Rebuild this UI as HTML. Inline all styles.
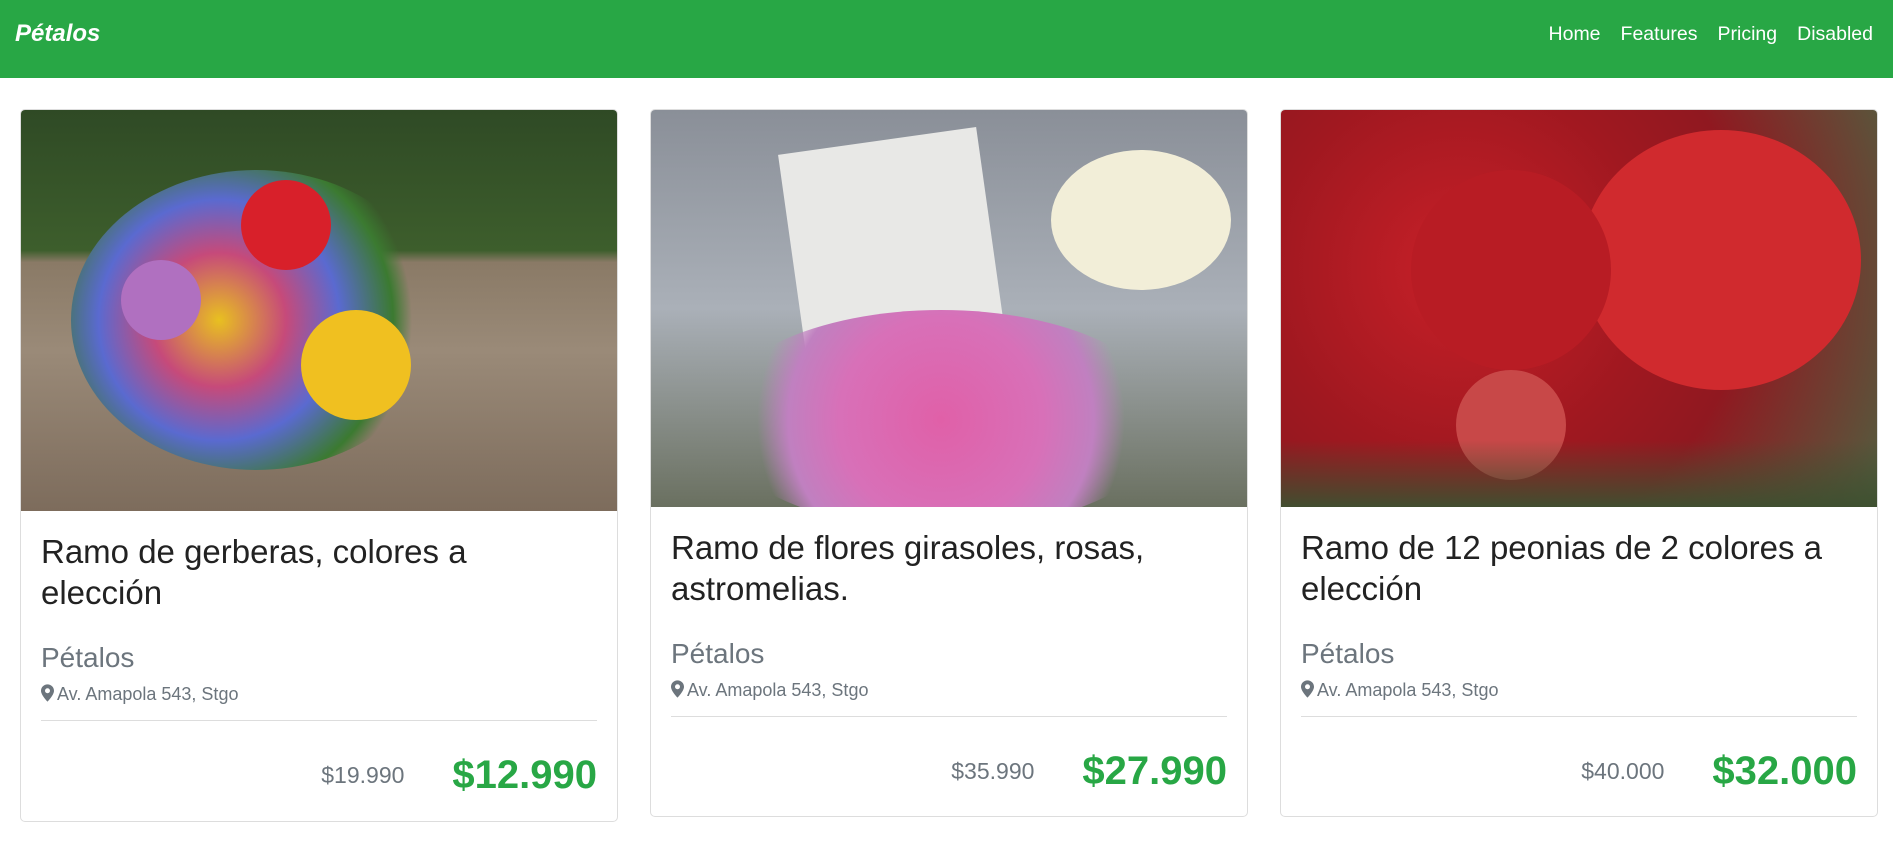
<!DOCTYPE html>
<html><head><meta charset="utf-8"><style>
*{box-sizing:border-box;margin:0;padding:0}
body{width:1893px;height:842px;background:#fff;font-family:"Liberation Sans",sans-serif;overflow:hidden;position:relative}
.nav{position:absolute;left:0;top:0;width:1893px;height:78px;background:#28a745}
.brand{position:absolute;left:15px;top:20px;color:#fff;font-weight:bold;font-style:italic;font-size:24px}
.links{position:absolute;right:20px;top:23px;color:#fff;font-size:19.5px}
.links span{margin-left:20px}
.card{position:absolute;top:109px;width:598px;border:1px solid #ddd;border-radius:5px;overflow:hidden}
.img{height:400px;position:relative;overflow:hidden}
.body{padding:20px 20px}
h2{font-weight:300;font-size:33px;line-height:41px;color:#222}
.shop{font-size:28px;color:#6c757d;margin-top:29px;font-weight:300}
.addr{font-size:18px;color:#6c757d;margin-top:10px}
.addr svg{vertical-align:-2px;margin-right:3px}
hr{border:0;border-top:1px solid #ddd;margin-top:15px}
.prices{text-align:right;margin-top:32px;height:60px}
.old{font-size:23px;color:#6c757d;margin-right:48px;vertical-align:middle}
.new{font-size:40px;font-weight:bold;color:#28a745;vertical-align:middle}
.b{position:absolute;border-radius:50%}
</style></head><body>
<div class="nav"><div class="brand">Pétalos</div><div class="links"><span>Home</span><span>Features</span><span>Pricing</span><span>Disabled</span></div></div>

<div class="card" style="left:20px;height:713px">
<div class="img" style="height:401px;background:linear-gradient(180deg,#2f4a25 0%,#3d5e2c 35%,#8a7a66 38%,#9a8a78 60%,#7d6c5c 100%)">
<div class="b" style="left:50px;top:60px;width:370px;height:300px;background:radial-gradient(circle at 40% 50%,#e8c020 0%,#c64a7a 25%,#5a6ad0 45%,#3b7a30 65%,transparent 72%)"></div>
<div class="b" style="left:220px;top:70px;width:90px;height:90px;background:#d8202a"></div>
<div class="b" style="left:280px;top:200px;width:110px;height:110px;background:#f0c020"></div>
<div class="b" style="left:100px;top:150px;width:80px;height:80px;background:#b070c0"></div>
</div>
<div class="body"><h2>Ramo de gerberas, colores a<br>elección</h2><div class="shop">Pétalos</div><div class="addr"><svg width="13" height="18" viewBox="0 0 12 16"><path d="M6 0C2.7 0 0 2.6 0 5.9 0 10 6 16 6 16s6-6 6-10.1C12 2.6 9.3 0 6 0zm0 8.2A2.3 2.3 0 1 1 6 3.6a2.3 2.3 0 0 1 0 4.6z" fill="#6c757d"/></svg>Av. Amapola 543, Stgo</div><hr><div class="prices"><span class="old">$19.990</span><span class="new">$12.990</span></div></div>
</div>

<div class="card" style="left:650px;height:708px">
<div class="img" style="height:397px;background:linear-gradient(180deg,#8a8f98 0%,#aab0b8 50%,#6a7060 100%)">
<div style="position:absolute;left:140px;top:30px;width:200px;height:200px;background:#e8e8e6;transform:rotate(-8deg)"></div>
<div class="b" style="left:400px;top:40px;width:180px;height:140px;background:#f2eed8"></div>
<div class="b" style="left:60px;top:200px;width:460px;height:220px;background:radial-gradient(circle,#e060a8 0%,#d870b8 40%,#c080c0 60%,transparent 72%)"></div>
</div>
<div class="body"><h2>Ramo de flores girasoles, rosas, astromelias.</h2><div class="shop">Pétalos</div><div class="addr"><svg width="13" height="18" viewBox="0 0 12 16"><path d="M6 0C2.7 0 0 2.6 0 5.9 0 10 6 16 6 16s6-6 6-10.1C12 2.6 9.3 0 6 0zm0 8.2A2.3 2.3 0 1 1 6 3.6a2.3 2.3 0 0 1 0 4.6z" fill="#6c757d"/></svg>Av. Amapola 543, Stgo</div><hr><div class="prices"><span class="old">$35.990</span><span class="new">$27.990</span></div></div>
</div>

<div class="card" style="left:1280px;height:708px">
<div class="img" style="height:397px;background:radial-gradient(circle at 30% 40%,#c82028 0%,#a01820 40%,#901820 60%,#506040 100%)">
<div class="b" style="left:300px;top:20px;width:280px;height:260px;background:#d02a2e"></div>
<div class="b" style="left:130px;top:60px;width:200px;height:200px;background:#b81c24"></div>
<div class="b" style="left:175px;top:260px;width:110px;height:110px;background:#c84848"></div>
<div style="position:absolute;left:0;top:330px;width:598px;height:70px;background:linear-gradient(180deg,transparent,#3e5030)"></div>
</div>
<div class="body"><h2>Ramo de 12 peonias de 2 colores a elección</h2><div class="shop">Pétalos</div><div class="addr"><svg width="13" height="18" viewBox="0 0 12 16"><path d="M6 0C2.7 0 0 2.6 0 5.9 0 10 6 16 6 16s6-6 6-10.1C12 2.6 9.3 0 6 0zm0 8.2A2.3 2.3 0 1 1 6 3.6a2.3 2.3 0 0 1 0 4.6z" fill="#6c757d"/></svg>Av. Amapola 543, Stgo</div><hr><div class="prices"><span class="old">$40.000</span><span class="new">$32.000</span></div></div>
</div>
</body></html>
